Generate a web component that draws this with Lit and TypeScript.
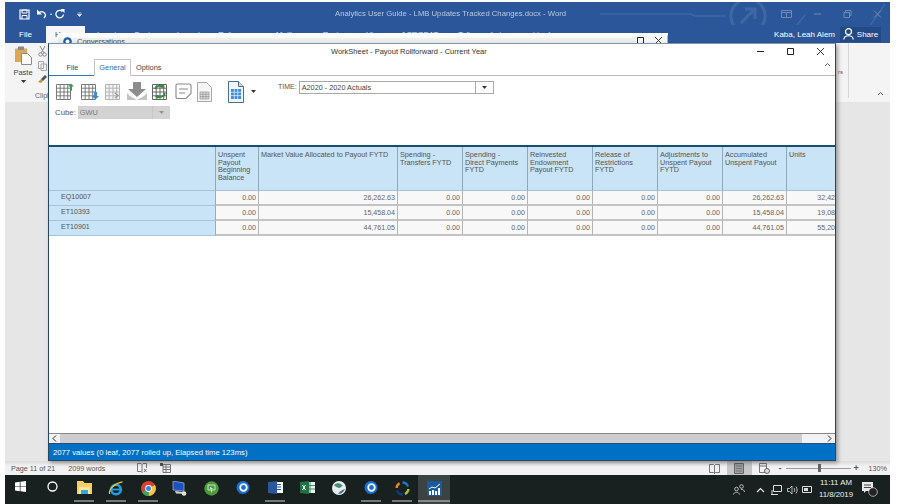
import { LitElement, html, css } from "lit";
import { customElement } from "lit/decorators.js";

const headers = [
  "",
  "Unspent\nPayout\nBeginning\nBalance",
  "Market Value Allocated to Payout FYTD",
  "Spending -\nTransfers FYTD",
  "Spending -\nDirect Payments\nFYTD",
  "Reinvested\nEndowment\nPayout FYTD",
  "Release of\nRestrictions\nFYTD",
  "Adjustments to\nUnspent Payout\nFYTD",
  "Accumulated\nUnspent Payout",
  "Units",
];
const rows = [
  ["EQ10007", "0.00", "26,262.63", "0.00", "0.00", "0.00", "0.00", "0.00", "26,262.63", "32,429"],
  ["ET10393", "0.00", "15,458.04", "0.00", "0.00", "0.00", "0.00", "0.00", "15,458.04", "19,088"],
  ["ET10901", "0.00", "44,761.05", "0.00", "0.00", "0.00", "0.00", "0.00", "44,761.05", "55,209"],
];

const gridPath = "M.5 .5h14v15h-14zM.5 4.2h14M.5 8h14M.5 11.8h14M4.2 .5v15M8 .5v15M11.7 .5v15";

const ic = {
  g1: html`<svg width="19" height="17" viewBox="0 0 19 17"><path d="${gridPath}" transform="translate(0 1)" fill="#fff" stroke="#7a7a7a"/><path d="M14 7V3.5h-2L15 .5l3 3h-2V8z" fill="#3f9a5a"/></svg>`,
  g2: html`<svg width="19" height="17" viewBox="0 0 19 17"><path d="${gridPath}" transform="translate(0 1)" fill="#fff" stroke="#7a7a7a"/><path d="M13 9h3v4h2l-3.500 3.500L11 13h2z" fill="#3d8ad6"/></svg>`,
  g3: html`<svg width="18" height="17" viewBox="0 0 18 17"><path d="${gridPath}" transform="translate(1 1)" fill="#f4f4f4" stroke="#b4b4b4"/><path d="M11 10l3 2.500-3 2.500" fill="none" stroke="#999" stroke-width="1.400"/></svg>`,
  dl: html`<svg width="22" height="19" viewBox="0 0 22 19"><path d="M7 0h8v7h5l-9 8-9-8h5z" fill="#8d8d8d"/><path d="M1 11v7h20v-7l-3 3-7 4-7-4z" fill="#c4c4c4"/></svg>`,
  g5: html`<svg width="18" height="17" viewBox="0 0 18 17"><path d="${gridPath}" transform="translate(1 1)" fill="#fff" stroke="#666"/><path d="M4 6a5 5 0 0 1 8-2M14 10a5 5 0 0 1-8 3" fill="none" stroke="#2f8a3c" stroke-width="1.800"/><path d="M11 1l3 3-4 1zM7 16l-3-3 4-1z" fill="#2f8a3c"/></svg>`,
  note: html`<svg width="17" height="17" viewBox="0 0 17 17"><path d="M2.500 1h12A1.500 1.500 0 0 1 16 2.500v8L11 15.500H2.500A1.500 1.500 0 0 1 1 14V2.500A1.500 1.500 0 0 1 2.500 1z" fill="#fff" stroke="#8a8a8a" stroke-width="1.100"/><path d="M4 6h9M4 10h6" stroke="#8a8a8a" stroke-width="1.100"/></svg>`,
  doc: html`<svg width="15" height="20" viewBox="0 0 15 20"><path d="M.5 .5h9l5 5v14H.500z" fill="#f6f6f6" stroke="#a8a8a8"/><path d="M3 10h9v7H3zM3 12.300h9M3 14.600h9M6 10v7M9 10v7" fill="#ddd" stroke="#888" stroke-width=".6"/></svg>`,
  big: html`<svg width="16" height="22" viewBox="0 0 16 22"><path d="M.5 .5h10l5 5v16H.500z" fill="#f2f6fa" stroke="#4a6f92"/><path d="M10.500 .5v5h5" fill="#cfdbe6" stroke="#4a6f92"/><path d="M3 8h10v10H3z" fill="#3a8fdc"/><path d="M3 11.300h10M3 14.600h10M6.300 8v10M9.700 8v10" stroke="#d6ebfb" stroke-width=".8"/></svg>`,
  caret: html`<svg width="5" height="3" viewBox="0 0 5 3"><path d="M0 0h5L2.500 3z" fill="#333"/></svg>`,
  min: html`<svg width="9" height="9" viewBox="0 0 9 9"><path d="M1 4.500h7" stroke="#222"/></svg>`,
  max: html`<svg width="9" height="9" viewBox="0 0 9 9"><path d="M1.500 1.500h6v6h-6z" fill="none" stroke="#222"/></svg>`,
  x: html`<svg width="9" height="9" viewBox="0 0 9 9"><path d="M1 1l7 7M8 1L1 8" stroke="#222" stroke-width=".9"/></svg>`,
  chev: html`<svg width="7" height="5" viewBox="0 0 7 5"><path d="M1 4l2.500-2.500L6 4" fill="none" stroke="#555"/></svg>`,
  left: html`<svg width="5" height="7" viewBox="0 0 5 7"><path d="M4 .5l-3 3 3 3" fill="none" stroke="#222"/></svg>`,
  right: html`<svg width="5" height="7" viewBox="0 0 5 7"><path d="M1 .5l3 3-3 3" fill="none" stroke="#222"/></svg>`,
  save: html`<svg width="11" height="11" viewBox="0 0 11 11"><path d="M1 1h9v9H1z" fill="none" stroke="#fff" stroke-width="1.200"/><path d="M3 1h5v3H3zM3 10V6.500h5V10" fill="none" stroke="#fff"/></svg>`,
  undo: html`<svg width="11" height="10" viewBox="0 0 11 10"><path d="M2 4.500c3-3 7-2 7.500 1.500 0 1-.5 2-1.500 3" fill="none" stroke="#fff" stroke-width="1.300"/><path d="M1 .5v5h5z" fill="#fff"/></svg>`,
  redo: html`<svg width="10" height="10" viewBox="0 0 10 10"><path d="M7.500 2.500a3.800 3.800 0 1 0 1 3" fill="none" stroke="#fff" stroke-width="1.300"/><path d="M5.500 0h4v4z" fill="#fff"/></svg>`,
  qat: html`<svg width="5" height="5" viewBox="0 0 5 5"><path d="M.5 1h4M.5 2.500h4L2.500 4.500z" stroke="#dfe7f2" stroke-width=".7" fill="#dfe7f2"/></svg>`,
  opt: html`<svg width="11" height="8" viewBox="0 0 11 8"><path d="M.5 .5h10v7H.500zM.5 2.500h10M5.500 2.500v5" fill="none" stroke="#6f89b3"/></svg>`,
  wmin: html`<svg width="9" height="8" viewBox="0 0 9 8"><path d="M1 4h7" stroke="#6f89b3"/></svg>`,
  wres: html`<svg width="9" height="8" viewBox="0 0 9 8"><path d="M1 2.500h5.500v5H1zM2.500 2.500V.5H8v5H6.500" fill="none" stroke="#6f89b3"/></svg>`,
  wx: html`<svg width="9" height="8" viewBox="0 0 9 8"><path d="M1 .5l7 7M8 .5l-7 7" stroke="#6f89b3"/></svg>`,
  share: html`<svg width="11" height="12" viewBox="0 0 11 12"><circle cx="5.500" cy="3.700" r="3" fill="none" stroke="#fff" stroke-width="1.200"/><path d="M.8 11.500c.5-5 9-5 9.400 0" fill="none" stroke="#fff" stroke-width="1.200"/></svg>`,
  paste: html`<svg width="17" height="19" viewBox="0 0 17 19"><path d="M0 2.500h12V16H0z" fill="#d9a95a"/><path d="M3 .5h6V4H3z" fill="#8a8a8a"/><path d="M6.500 7.500h6l4 4v7h-10z" fill="#fff" stroke="#8a8a8a"/></svg>`,
  scis: html`<svg width="9" height="11" viewBox="0 0 9 11"><path d="M2 0l4 7M7 0L3 7" stroke="#8a8a8a"/><circle cx="2.500" cy="8.500" r="1.700" fill="none" stroke="#8a8a8a"/><circle cx="6.500" cy="8.500" r="1.700" fill="none" stroke="#8a8a8a"/></svg>`,
  copy: html`<svg width="9" height="10" viewBox="0 0 9 10"><path d="M.5 .5h5v7h-5zM3 3h5.500v6.500H3z" fill="#f3f3f3" stroke="#aaa"/></svg>`,
  brush: html`<svg width="9" height="8" viewBox="0 0 9 8"><path d="M0 7l3-3 2 2-2 2z" fill="#c49a3c"/><path d="M3 4l4-4 2 2-4 4z" fill="#555"/></svg>`,
  tbook: html`<svg width="11" height="11" viewBox="0 0 11 11"><path d="M.5 1.500h4l1 1v8l-1-1h-4zM10.500 1.500h-4l-1 1v8l1-1h4z" fill="none" stroke="#777"/></svg>`,
  tbox: html`<svg width="10" height="11" viewBox="0 0 10 11"><path d="M.5 .5h9v10h-9z" fill="#9aa0a0" stroke="#666"/><path d="M2 3h6M2 5.500h6M2 8h6" stroke="#777"/></svg>`,
  tweb: html`<svg width="11" height="11" viewBox="0 0 11 11"><path d="M.5 .5h7v9h-7zM.5 3h7" fill="none" stroke="#777"/><circle cx="8" cy="8" r="2.500" fill="#ddd" stroke="#666"/></svg>`,
  sbook: html`<svg width="10" height="10" viewBox="0 0 10 10"><path d="M.5 .5h3.500l1 1v8l-1-1H.500zM5 1.500l1-1h3.500v4.500M7 6l2.500 3M9.500 6L7 9" fill="none" stroke="#777"/></svg>`,
  sgrid: html`<svg width="11" height="10" viewBox="0 0 11 10"><path d="M3 1.500h7.500v8H3zM3 4h7.500M3 6.500h7.500M6 1.500v8" fill="none" stroke="#777"/><path d="M0 0h3v3H0z" fill="#555"/></svg>`,
  win: html`<svg width="11" height="11" viewBox="0 0 11 11"><path d="M0 1.500l4.800-.7v4.400H0zM5.500 .7L11 0v5.200H5.500zM0 5.800h4.800v4.400L0 9.500zM5.500 5.800H11V11l-5.500-.7z" fill="#fff"/></svg>`,
  cortana: html`<svg width="11" height="11" viewBox="0 0 11 11"><circle cx="5.500" cy="5.500" r="4.500" fill="none" stroke="#fff" stroke-width="1.300"/></svg>`,
  folder: html`<svg width="15" height="13" viewBox="0 0 15 13"><path d="M0 0h6l1.500 2H15v11H0z" fill="#f5cf62"/><path d="M2 6h11v7H2z" fill="#fbe79f"/><path d="M4 9h7v4H4z" fill="#35a5dd"/></svg>`,
  ie: html`<svg width="16" height="16" viewBox="0 0 16 16"><circle cx="8" cy="8.500" r="4.800" fill="none" stroke="#1ea0e6" stroke-width="2.600"/><path d="M3 8.500h10" stroke="#1ea0e6" stroke-width="1.800"/><path d="M1.500 13C.5 8 7 2 14.500 .8" fill="none" stroke="#f2c230" stroke-width="1.200"/></svg>`,
  chrome: html`<svg width="15" height="15" viewBox="0 0 15 15"><circle cx="7.500" cy="7.500" r="7.500" fill="#d8402f"/><path d="M7.500 7.500L1 11a7.500 7.500 0 0 0 7 4z" fill="#3aa454"/><path d="M7.500 7.500l.5 7.500a7.500 7.500 0 0 0 6-11z" fill="#f7c63a"/><circle cx="7.500" cy="7.500" r="3.400" fill="#fff"/><circle cx="7.500" cy="7.500" r="2.500" fill="#3c80e8"/></svg>`,
  pc: html`<svg width="15" height="15" viewBox="0 0 15 15"><path d="M1 0l11 2v8L1 9z" fill="#1a52c4" stroke="#ccd" stroke-width=".6"/><path d="M3 10l8 1 3 2-10-.5z" fill="#cdd2d8"/><circle cx="12" cy="12.500" r="2.300" fill="#dfe8df"/></svg>`,
  green: html`<svg width="15" height="15" viewBox="0 0 15 15"><circle cx="7.500" cy="7.500" r="7.200" fill="#4a9a3c"/><path d="M4 4h7v5H4zM7.500 9v2.500" fill="none" stroke="#d8f0d0" stroke-width=".9"/><path d="M6 6l3 1.500-1.500.5-.5 1.500z" fill="#fff"/></svg>`,
  chat: html`<svg width="14" height="14" viewBox="0 0 14 14"><circle cx="7" cy="6.500" r="6.500" fill="#1b6fd6"/><path d="M3 13l2-3 3 1z" fill="#1b6fd6"/><circle cx="7.500" cy="6.500" r="3.300" fill="none" stroke="#fff" stroke-width="1.700"/></svg>`,
  word: html`<svg width="15" height="13" viewBox="0 0 15 13"><path d="M5 1h10v11H5z" fill="#f3f6fa"/><path d="M8 3.500h5M8 6h5M8 8.500h5" stroke="#2b579a"/><path d="M0 1l9-1v13l-9-1z" fill="#2b579a"/></svg>`,
  excel: html`<svg width="15" height="13" viewBox="0 0 15 13"><path d="M5 1h10v11H5z" fill="#e8f3ec"/><path d="M10 1v11M5 4.500h10M5 8h10" stroke="#217346" stroke-width=".8"/><path d="M0 1l9-1v13l-9-1z" fill="#217346"/><path d="M2.500 4l3 5M5.500 4l-3 5" stroke="#fff"/></svg>`,
  globe: html`<svg width="14" height="14" viewBox="0 0 14 14"><circle cx="7" cy="7" r="7" fill="#e8eef0"/><path d="M2 4c3-3 7-2 9 1-2 0-2 2-4 2-2-1-3-1-5-3z" fill="#3e8f70"/><path d="M6 13c3 0 6-2 7-5-3 1-5 2-7 5z" fill="#4a6f8f"/></svg>`,
  ring: html`<svg width="15" height="15" viewBox="0 0 15 15" fill="none" stroke-width="2.300"><path d="M7.500 1.500a6 6 0 0 1 5.500 4" stroke="#1f76c8"/><path d="M13.400 8a6 6 0 0 1-3.400 5" stroke="#a8c838"/><path d="M8 13.500a6 6 0 0 1-6-4" stroke="#0f3c78"/><path d="M1.600 7a6 6 0 0 1 3-4.700" stroke="#f08a1e"/></svg>`,
  chart: html`<svg width="15" height="15" viewBox="0 0 15 15"><path d="M0 0h15v15H0z" fill="#1a5a9a"/><path d="M2 8l3-2 3 1 5-4" fill="none" stroke="#fff"/><path d="M2 10h2v4H2zM5 9h2v5H5zM8 10h2v4H8zM11 7h2v7h-2z" fill="#fff"/></svg>`,
  people: html`<svg width="12" height="11" viewBox="0 0 12 11"><circle cx="3.500" cy="5" r="1.800" fill="none" stroke="#ddd" stroke-width=".8"/><path d="M.5 10.500c.4-3 5.500-3 6 0" fill="none" stroke="#ddd" stroke-width=".8"/><circle cx="8.500" cy="2.500" r="1.800" fill="none" stroke="#ddd" stroke-width=".8"/><path d="M8 5.500c2-.4 3.300.8 3.500 2.500" fill="none" stroke="#ddd" stroke-width=".8"/></svg>`,
  up: html`<svg width="9" height="6" viewBox="0 0 9 6"><path d="M1 5l3.500-3.500L8 5" fill="none" stroke="#eee" stroke-width="1.100"/></svg>`,
  net: html`<svg width="11" height="10" viewBox="0 0 11 10"><path d="M2.500 .5h8v6h-8zM0 9.500h7M1 5v4" fill="none" stroke="#ddd"/></svg>`,
  vol: html`<svg width="11" height="10" viewBox="0 0 11 10"><path d="M.5 3.500h2l2.500-2.500v8L2.500 6.500h-2z" fill="none" stroke="#ddd" stroke-width=".8"/><path d="M7 3c1 1 1 3 0 4M9 1.500c1.500 2 1.500 5 0 7" fill="none" stroke="#ddd" stroke-width=".8"/></svg>`,
  bat: html`<svg width="11" height="7" viewBox="0 0 11 7"><path d="M.5 .5h9v6h-9z" fill="none" stroke="#ddd"/><path d="M2 2h4v3H2z" fill="#ddd"/></svg>`,
  msg: html`<svg width="16" height="15" viewBox="0 0 16 15"><path d="M0 0h11v9H4l-2 2V9H0z" fill="#e8e8e8"/><path d="M2 3h7M2 5.500h7" stroke="#444"/><circle cx="11" cy="10" r="4.300" fill="#222" stroke="#ddd" stroke-width=".7"/></svg>`,
  conv: html`<svg width="9" height="9" viewBox="0 0 9 9"><circle cx="4.500" cy="4.500" r="4.300" fill="#1b5fb0"/><circle cx="4.500" cy="4.500" r="2" fill="#fff"/></svg>`,
};

@customElement("app-root")
export class AppRoot extends LitElement {
  static styles = css`
    :host { display: block; width: 897px; height: 504px; background: #fff; overflow: hidden; font-family: "Liberation Sans", Arial, sans-serif; }
    svg { display: block; flex: none; }
    .stage { position: relative; width: 897px; height: 504px; box-sizing: border-box; padding: 2px 7px 0 5px; display: flex; flex-direction: column; filter: blur(0.45px); overflow: hidden; }

    /* Word frame */
    .wtitle { height: 23px; background: #2b579a; display: flex; align-items: center; position: relative; flex: none; }
    .qat { display: flex; align-items: center; padding: 1px 0 0 14px; }
    .qat .gap1 { margin-left: 6px; }
    .qat .d { color: #dfe7f2; font-size: 6px; margin: 0 3px; }
    .qat .gap2 { margin-left: 12px; }
    .wname { position: absolute; left: 330px; top: 7px; color: #b9c8e0; font-size: 7.7px; white-space: nowrap; }
    .decor { position: absolute; right: 0; top: 0; }
    .wctl { margin-left: auto; display: flex; gap: 21px; padding-right: 8px; position: relative; }
    .wtabs { height: 18px; background: #2b579a; display: flex; align-items: stretch; color: #dfe7f2; font-size: 7.8px; flex: none; position: relative; }
    .wtabs .t { display: flex; align-items: center; }
    .wtabs .file { width: 41px; justify-content: center; color: #fff; font-size: 8px; box-sizing: border-box; }
    .wtabs .home { width: 39px; background: #f6f6f6; margin-top: 1px; justify-content: center; color: #444; margin-right: 12px; }
    .wtabs .row { display: flex; gap: 18px; align-items: center; }
    .wtabs .tell { margin-left: 20px; }
    .wtabs .user { margin-left: auto; display: flex; align-items: center; color: #fff; font-size: 8px; }
    .share { background: #234a85; height: 15px; width: 41px; margin: 0 9px 0 5px; display: flex; align-items: center; justify-content: center; gap: 3px; color: #fff; }

    .ribbon { height: 59px; background: #f4f4f4; display: flex; justify-content: space-between; flex: none; color: #444; font-size: 7.5px; }
    .rleft { display: flex; padding: 3px 0 0 8px; gap: 5px; position: relative; }
    .paste { width: 20px; display: flex; flex-direction: column; align-items: center; gap: 3px; }
    .small { display: flex; flex-direction: column; gap: 4px; padding-top: 0; }
    .clip { align-self: flex-end; margin: 0 0 3px -17px; color: #666; font-size: 7px; }
    .rright { width: 52px; display: flex; }
    .rs { padding-top: 26px; font-size: 6px; width: 10px; color: #555; }
    .rgroup { flex: 1; border-left: 1px solid #d6d6d6; margin: 0 0 4px 0; display: flex; justify-content: flex-end; align-items: flex-end; padding: 0 6px 2px 0; }

    .body { flex: 1; background: #e6e6e6; }

    .status { height: 14px; flex: none; background: linear-gradient(#dadada, #f2f2f2 35%); display: flex; align-items: center; font-size: 7.2px; color: #555; padding-left: 6px; }
    .status .w { margin-left: 13px; }
    .status .i1 { margin-left: 32px; }
    .status .i2 { margin-left: 13px; }
    .views { margin-left: auto; display: flex; align-items: stretch; height: 100%; }
    .views .v { width: 25px; display: flex; align-items: center; justify-content: center; }
    .views .on { background: #c6c6c6; }
    .zoomer { display: flex; align-items: center; gap: 2px; padding-right: 3px; }
    .zoomer b { font-weight: 700; font-size: 9px; width: 7px; text-align: center; color: #555; }
    .slider { width: 65px; height: 1px; background: #999; display: flex; justify-content: center; align-items: center; }
    .thumb { width: 3px; height: 8px; background: #666; flex: none; margin-left: 3px; }
    .pct { margin-left: 7px; }

    .taskbar { height: 29px; flex: none; background: #18211f; display: flex; align-items: stretch; color: #eee; }
    .task { width: 31.8px; flex: none; display: flex; flex-direction: column; align-items: center; box-sizing: border-box; padding-top: 6px; }
    .task .mid { height: 19px; display: flex; align-items: flex-start; }
    .task .bar { width: 20px; height: 2px; background: #777; margin-top: auto; margin-bottom: 2px; }
    .task.on { background: #3b4342; }
    .task.on .bar { width: 100%; background: #888; }
    .tray { margin-left: auto; display: flex; align-items: center; padding-right: 12px; }
    .tray .p { margin-right: 11px; }
    .tray .s1 { margin-right: 6px; }
    .tray .s2 { margin-right: 5px; }
    .tray .s3 { margin-right: 4px; }
    .clock { width: 44px; text-align: center; font-size: 7.8px; line-height: 12px; margin: -1px 4px 0 1px; }

    /* Floating windows */
    .conv { position: absolute; left: 58px; top: 33px; width: 610px; height: 15px; background: linear-gradient(#fff 30%, #eee 40%); border-bottom: 1px solid #aaa; box-sizing: border-box; display: flex; align-items: center; padding: 2px 0 0 5px; gap: 5px; font-size: 7.5px; color: #444; }
    .conv .c { margin-left: auto; display: flex; gap: 9px; padding-right: 4px; }

    .sheet { position: absolute; left: 48px; top: 43px; width: 788px; height: 418px; box-sizing: border-box; background: #fff; border: 1px solid #27465f; border-top-color: #7f95a8; box-shadow: 2px 2px 4px rgba(0,0,0,.35); display: flex; flex-direction: column; color: #444; }
    .stitle { height: 15px; display: flex; align-items: center; flex: none; padding-left: 282px; font-size: 7.5px; color: #333; }
    .sctl { margin-left: auto; display: flex; gap: 21px; padding-right: 10px; }
    .stabs { height: 17px; display: flex; align-items: stretch; flex: none; border-bottom: 1px solid #bcbcbc; font-size: 7.4px; color: #444; box-sizing: border-box; }
    .stabs > div { display: flex; align-items: center; justify-content: center; }
    .stabs .f { width: 45px; box-shadow: 0 1px 0 #2e7ab8; padding-left: 2px; box-sizing: border-box; }
    .stabs .g { width: 37px; color: #2c6fb0; border: 1px solid #c4c4c4; border-bottom: 1px solid #fff; margin-bottom: -1px; box-sizing: border-box; }
    .stabs .o { margin-left: 5px; }
    .stabs .up { margin-left: auto; padding: 0 4px 6px 0; }
    .tools { height: 69px; flex: none; box-sizing: border-box; padding: 4px 0 0 7px; font-size: 7px; color: #555; }
    .r1 { display: flex; align-items: center; height: 23px; }
    .r1 .s4 { margin-right: 4px; }
    .r1 .s6 { margin-right: 6px; }
    .r1 .s3 { margin-right: 3px; }
    .r1 .s5 { margin-right: 5px; }
    .r1 .bigd { margin: 0 7px 0 16px; }
    .r1 .bigc { margin-right: 22px; }
    .r1 .tl { margin: 3px 2px 0 0; align-self: flex-start; }
    .sel { width: 195px; height: 13px; box-sizing: border-box; border: 1px solid #aaa; display: flex; align-items: center; align-self: flex-start; margin-top: 1px; background: #fff; color: #444; font-size: 7.3px; padding-left: 2px; }
    .sel .txt { flex: 1; }
    .sel .btn { width: 17px; height: 100%; border-left: 1px solid #aaa; display: flex; align-items: center; justify-content: center; }
    .r2 { display: flex; align-items: center; gap: 2px; margin: 3px 0 0 -1px; font-size: 7.8px; }
    .dis { width: 92px; height: 13px; background: #d3d3d3; display: flex; align-items: center; padding-left: 2px; box-sizing: border-box; color: #777; font-size: 7.4px; }
    .dis .txt { flex: 1; }
    .dis .btn { width: 17px; height: 100%; border-left: 1px solid #bbb; display: flex; align-items: center; justify-content: center; opacity: .4; }

    .tablewrap { flex: 1; min-height: 0; overflow: hidden; border-top: 2px solid #17506f; }
    .grid { display: grid; grid-template-columns: 167px 43px 139px 65px 65px 65px 65px 65px 64px 55px; grid-template-rows: 44px 15px 15px 15px; width: 793px; font-size: 7.1px; color: #666; }
    .h { background: #c9e3f7; border-right: 1px solid #8ea9bc; box-sizing: border-box; padding: 4px 2px 0 2px; white-space: pre; line-height: 7.7px; font-size: 7.25px; color: #555; border-bottom: 1px solid #a9c3d6; }
    .l { background: #c9e3f7; border-right: 1px solid #90aec4; border-bottom: 1px solid #a9c3d6; box-sizing: border-box; padding: 0 0 3px 12px; display: flex; align-items: center; color: #555; }
    .c { background: #f8f8f8; border-right: 1px solid #b4b4b4; border-bottom: 2px solid #c4c4c4; box-sizing: border-box; padding: 1px 2px 0 0; display: flex; align-items: center; justify-content: flex-end; }

    .scroll { height: 10px; flex: none; display: flex; align-items: center; background: #cdcdcd; border-top: 1px solid #888; box-sizing: border-box; }
    .scroll .a { width: 11px; height: 100%; background: #f2f2f2; display: flex; align-items: center; justify-content: center; }
    .scroll .track { flex: 1; }
    .scroll .rest { width: 22px; height: 100%; background: #f2f2f2; }
    .sbar { height: 17px; flex: none; background: #0070c4; border-top: 1px solid #1a4f7e; box-sizing: border-box; color: #fff; font-size: 7.7px; display: flex; align-items: center; padding-left: 4px; }
  `;

  private task(i: unknown, open = false, on = false) {
    return html`<div class="task ${on ? "on" : ""}"><div class="mid">${i}</div>${open ? html`<div class="bar"></div>` : ""}</div>`;
  }

  render() {
    return html`<div class="stage">
      <div class="wtitle">
        <svg class="decor" width="330" height="41" viewBox="0 0 330 41" fill="none" stroke="#3d68a2" stroke-width="1.500">
          <circle cx="188" cy="14" r="17" stroke-width="3"/>
          <path d="M181 21l14-14M185 7h10v10" stroke-width="3"/>
          <path d="M40 12h90l6 2h30M52 25h88l35 3M300 38l25-36M225 38l20-25" />
        </svg>
        <div class="qat">${ic.save}<span class="gap1">${ic.undo}</span><span class="d">•</span>${ic.redo}<span class="gap2">${ic.qat}</span></div>
        <div class="wname">Analytics User Guide - LMB Updates Tracked Changes.docx - Word</div>
        <div class="wctl">${ic.opt}${ic.wmin}${ic.wres}${ic.wx}</div>
      </div>
      <div class="wtabs">
        <div class="t file">File</div>
        <div class="t home">Home</div>
        <div class="row"><span>Insert</span><span>Design</span><span>Layout</span><span>References</span><span>Mailings</span><span>Review</span><span>View</span><span>ACROBAT</span></div>
        <div class="t tell">Tell me what you want to do</div>
        <div class="user">Kaba, Leah Alem<div class="share">${ic.share}Share</div></div>
      </div>
      <div class="ribbon">
        <div class="rleft">
          <div class="paste">${ic.paste}<span>Paste</span>${ic.caret}</div>
          <div class="small">${ic.scis}${ic.copy}${ic.brush}</div>
          <div class="clip">Clipboard</div>
        </div>
        <div class="rright"><div class="rs">rs</div><div class="rgroup">${ic.chev}</div></div>
      </div>
      <div class="body"></div>
      <div class="status">
        <span>Page 11 of 21</span><span class="w">2099 words</span>
        <span class="i1">${ic.sbook}</span><span class="i2">${ic.sgrid}</span>
        <div class="views">
          <div class="v">${ic.tbook}</div><div class="v on">${ic.tbox}</div><div class="v">${ic.tweb}</div>
        </div>
        <div class="zoomer"><b>-</b><div class="slider"><div class="thumb"></div></div><b>+</b><span class="pct">130%</span></div>
      </div>
      <div class="taskbar">
        ${this.task(ic.win)}${this.task(ic.cortana)}
        ${this.task(ic.folder, true)}${this.task(ic.ie, true)}${this.task(ic.chrome, true)}${this.task(ic.pc)}
        ${this.task(ic.green)}${this.task(ic.chat)}${this.task(ic.word, true)}${this.task(ic.excel)}
        ${this.task(ic.globe)}${this.task(ic.chat, true)}${this.task(ic.ring, true)}${this.task(ic.chart, true, true)}
        <div class="tray">
          <span class="p">${ic.people}</span><span class="s1">${ic.up}</span><span class="s2">${ic.net}</span><span class="s3">${ic.vol}</span>${ic.bat}
          <div class="clock">11:11 AM<br />11/8/2019</div>${ic.msg}
        </div>
      </div>

      <div class="conv">${ic.conv}<span>Conversations</span><div class="c">${ic.max}${ic.x}</div></div>

      <div class="sheet">
        <div class="stitle"><span>WorkSheet - Payout Rollforward - Current Year</span>
          <div class="sctl">${ic.min}${ic.max}${ic.x}</div></div>
        <div class="stabs"><div class="f">File</div><div class="g">General</div><div class="o">Options</div><div class="up">${ic.chev}</div></div>
        <div class="tools">
          <div class="r1">
            <span class="s6">${ic.g1}</span><span class="s4">${ic.g2}</span><span class="s4">${ic.g3}</span><span class="s3">${ic.dl}</span><span class="s6">${ic.g5}</span><span class="s5">${ic.note}</span>${ic.doc}
            <span class="bigd">${ic.big}</span><span class="bigc">${ic.caret}</span>
            <span class="tl">TIME:</span>
            <div class="sel"><span class="txt">A2020 - 2020 Actuals</span><span class="btn">${ic.caret}</span></div>
          </div>
          <div class="r2"><span>Cube:</span><div class="dis"><span class="txt">GWU</span><span class="btn">${ic.caret}</span></div></div>
        </div>
        <div class="tablewrap">
          <div class="grid">
            ${headers.map((h) => html`<div class="h">${h}</div>`)}
            ${rows.map((r) => r.map((v, i) => html`<div class="${i === 0 ? "l" : "c"}">${v}</div>`))}
          </div>
        </div>
        <div class="scroll"><span class="a">${ic.left}</span><span class="track"></span><span class="rest"></span><span class="a">${ic.right}</span></div>
        <div class="sbar">2077 values (0 leaf, 2077 rolled up, Elapsed time 123ms)</div>
      </div>
    </div>`;
  }
}
